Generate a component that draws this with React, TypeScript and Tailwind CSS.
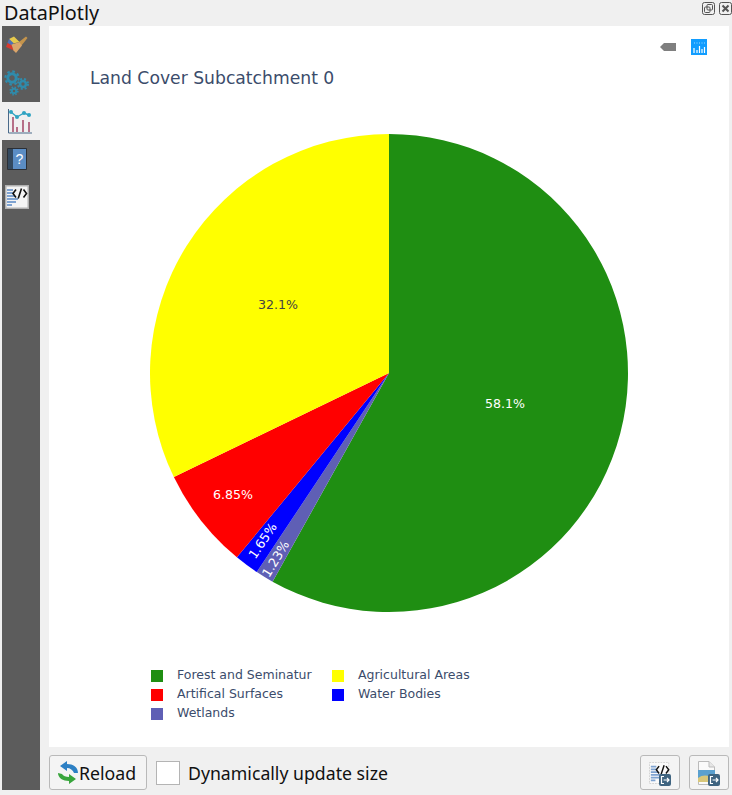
const CX = 240;
const CY = 240;
const R = 239;

const slices = [
  { label: "Forest and Seminatur", pct: 58.1, color: "#1f8e12" },
  { label: "Wetlands", pct: 1.23, color: "#5f5fb5" },
  { label: "Water Bodies", pct: 1.65, color: "#0000ff" },
  { label: "Artifical Surfaces", pct: 6.85, color: "#ff0000" },
  { label: "Agricultural Areas", pct: 32.17, color: "#ffff00" },
];

function point(deg: number) {
  const a = (deg * Math.PI) / 180;
  return `${CX + R * Math.sin(a)} ${CY - R * Math.cos(a)}`;
}

function Pie() {
  let start = 0;
  return (
    <svg width="480" height="480" viewBox="0 0 480 480" className="block">
      {slices.map((s) => {
        const end = start + (s.pct / 100) * 360;
        const large = end - start > 180 ? 1 : 0;
        const d = `M${CX} ${CY} L${point(start)} A${R} ${R} 0 ${large} 1 ${point(end)} Z`;
        start = end;
        return <path key={s.label} d={d} fill={s.color} />;
      })}
      <g fontFamily="'DejaVu Sans', sans-serif" fontSize="12.6" textAnchor="middle">
        <text x="356" y="275" fill="#fff">58.1%</text>
        <text x="129" y="176" fill="#444">32.1%</text>
        <text x="84" y="366" fill="#fff">6.85%</text>
        <text transform="translate(114 408) rotate(-56)" fill="#fff" dy="4">1.65%</text>
        <text transform="translate(127 426) rotate(-58.6)" fill="#fff" dy="4">1.23%</text>
      </g>
    </svg>
  );
}

function Swatch({ color }: { color: string }) {
  return <span className="h-3 w-3 shrink-0" style={{ background: color }} />;
}

function LegendItem({ label, color }: { label: string; color: string }) {
  return (
    <div className="flex h-[19px] items-center gap-[14px]">
      <Swatch color={color} />
      <span className="whitespace-nowrap">{label}</span>
    </div>
  );
}

function Broom() {
  return (
    <svg width="22" height="18" viewBox="0 0 22 18">
      <path d="M13 6 L20 0.5 L21.5 2 L15.5 9.5 Z" fill="#c4944c" />
      <path d="M3 3 L8 0.5 L13.5 6 L7 7.5 Z" fill="#e6c94c" />
      <path d="M1.5 7 L3 3 L7.5 7 L5.5 10 Z" fill="#4f72b8" />
      <path d="M0 11 L1.5 7 L5.5 9 L8 14.5 Z" fill="#d8392f" />
      <path d="M5.5 8.5 L13.5 6 L16 9.5 L10 17 L7.5 14.5 Z" fill="#dba56a" />
    </svg>
  );
}

function Gears() {
  return (
    <svg width="26" height="26" viewBox="0 0 26 26" fill="none" stroke="#2f8bab">
      <circle cx="8" cy="8" r="4.2" strokeWidth="3" />
      <circle cx="8" cy="8" r="6.6" strokeWidth="2.2" strokeDasharray="2.6 2.6" />
      <circle cx="19" cy="14" r="3" strokeWidth="2.6" />
      <circle cx="19" cy="14" r="5" strokeWidth="2" strokeDasharray="2 2" />
      <circle cx="10" cy="21" r="2.2" strokeWidth="2" />
      <circle cx="10" cy="21" r="3.8" strokeWidth="1.6" strokeDasharray="1.5 1.5" />
    </svg>
  );
}

function ChartIcon() {
  return (
    <svg width="26" height="26" viewBox="0 0 26 26" fill="none">
      <path d="M1.5 1 V25 H25" stroke="#4a6a8a" strokeWidth="1" />
      <path d="M6 9 V24 M10 19 V24 M16 12 V24 M22 14 V24" stroke="#a8506e" strokeWidth="1.6" />
      <path d="M4 4 L10 9 L17 5 L22 7" stroke="#2fa3c2" strokeWidth="1.4" />
      <circle cx="4" cy="4" r="2" fill="#2fa3c2" />
      <circle cx="10" cy="9" r="2" fill="#2fa3c2" />
      <circle cx="17" cy="5" r="2" fill="#2fa3c2" />
      <circle cx="22" cy="7" r="2" fill="#2fa3c2" />
    </svg>
  );
}

function HelpBook() {
  return (
    <svg width="20" height="22" viewBox="0 0 20 22">
      <rect width="20" height="22" rx="1" fill="#2b2f36" />
      <rect x="1" y="1" width="5" height="20" fill="#33495f" />
      <rect x="6" y="1" width="13" height="20" fill="#5b8dc4" />
      <text x="12.5" y="16" fontSize="14" textAnchor="middle" fill="#fff" fontFamily="'Liberation Sans', sans-serif">?</text>
    </svg>
  );
}

function CodeDoc({ framed = true, size = 24 }: { framed?: boolean; size?: number }) {
  return (
    <svg width={size} height={size} viewBox="0 0 24 24">
      {framed ? (
        <rect x="0.75" y="0.75" width="22.5" height="22.5" fill="#f4f4f4" stroke="#b0b0b0" strokeWidth="1.5" />
      ) : (
        <rect x="0.5" y="0.5" width="21" height="23" fill="#fafafa" stroke="#d0d0d0" strokeDasharray="2 1" />
      )}
      <path d="M2 5 H8 M2 8 H8 M2 11 H10 M2 14 H13 M2 17 H11 M2 20 H7" stroke="#7fa3d1" strokeWidth="1.8" />
      <path d="M11 4.5 L8 8.5 L11 12.5 M18.5 4.5 L21.5 8.5 L18.5 12.5 M16.5 3.5 L13.2 13.5" fill="none" stroke="#111" strokeWidth="1.6" />
    </svg>
  );
}

function ReloadIcon() {
  return (
    <svg width="20" height="24" viewBox="0 0 20 24" className="shrink-0">
      <path d="M2 5 L9 0 V3 C15 3 20 6 20 12 L16 12 C15 9 12 7 9 7 V10 Z" fill="#2d80c4" />
      <path d="M18 18 L11 13 V16 C8 16 5 15 4 13 L0 12 C0 17 5 20 11 20 V23 Z" fill="#38a53c" />
    </svg>
  );
}

function ExportBadge() {
  return (
    <span className="absolute bottom-[3px] right-[8px] flex h-[12px] w-[12px] items-center justify-center rounded-[2px] bg-[#3f6480]">
      <svg width="10" height="10" viewBox="0 0 10 10" fill="none" stroke="#fff" strokeWidth="1.2">
        <path d="M4 1.5 H1.5 V8.5 H4 M3.5 5 H9 M7 3 L9 5 L7 7" />
      </svg>
    </span>
  );
}

function ImageDoc() {
  return (
    <svg width="20" height="24" viewBox="0 0 20 24">
      <path d="M1.5 0.5 H12 L17.5 6 V23.5 H1.5 Z" fill="#fafafa" stroke="#bbb" />
      <path d="M12 0.5 V6 H17.5" fill="#e6e6e6" stroke="#bbb" />
      <rect x="1" y="9" width="17" height="12" fill="#5aa0cf" />
      <path d="M1 21 V17 C6 13 12 14 18 18 V21 Z" fill="#d8c77a" />
    </svg>
  );
}

export default function App() {
  return (
    <div className="flex h-[795px] w-[732px] flex-col overflow-hidden bg-[#f0f0f0] font-['Noto_Sans',sans-serif]">
      {/* Dock title */}
      <div className="flex h-[26px] shrink-0 items-center justify-between">
        <span className="pl-[4px] text-[19.8px] leading-[26px] text-[#111]">DataPlotly</span>
        <div className="mb-[10px] flex gap-[4px]">
          <svg width="13" height="13" viewBox="0 0 13 13" fill="none" stroke="#555" strokeWidth="1">
            <rect x="0.5" y="0.5" width="12" height="12" rx="2" />
            <rect x="5" y="2.5" width="5.5" height="5.5" rx="1" />
            <rect x="2.5" y="5" width="5.5" height="5.5" rx="1" />
          </svg>
          <svg width="13" height="13" viewBox="0 0 13 13" fill="none" stroke="#555">
            <rect x="0.5" y="0.5" width="12" height="12" rx="2" strokeWidth="1" />
            <path d="M3.5 3.5 L9.5 9.5 M9.5 3.5 L3.5 9.5" strokeWidth="2" />
          </svg>
        </div>
      </div>

      <div className="flex min-h-0 flex-1">
        {/* Side menu */}
        <div className="ml-[2px] flex h-[764px] w-[38px] shrink-0 flex-col">
          <div className="flex h-[76px] flex-col bg-[#5c5c5c]">
            <div className="flex h-[38px] items-center pl-[4px]"><Broom /></div>
            <div className="flex h-[38px] items-center pl-[2px]"><Gears /></div>
          </div>
          <div className="flex h-[38px] items-center pl-[5px]"><ChartIcon /></div>
          <div className="flex flex-1 flex-col bg-[#5c5c5c]">
            <div className="flex h-[38px] items-center pl-[5px]"><HelpBook /></div>
            <div className="flex h-[38px] items-center pl-[3px]"><CodeDoc /></div>
          </div>
        </div>

        <div className="ml-[9px] flex min-w-0 flex-1 flex-col">
          {/* Plot view */}
          <div className="relative mr-[3px] h-[721px] bg-white pt-[42px] font-['DejaVu_Sans',sans-serif]">
            <div className="absolute right-[22px] top-[13px] flex items-center gap-[15px]">
              <svg width="16" height="8" viewBox="0 0 16 8"><path d="M0 4 L4 0 H16 V8 H4 Z" fill="#7f7f7f" /></svg>
              <svg width="16" height="16" viewBox="0 0 16 16">
                <rect width="16" height="16" fill="#119dff" />
                <path d="M3 9 V14 M6 11 V14 M8.5 7 V14 M11 10 V14 M13.5 8 V14" stroke="#fff" strokeWidth="1.2" />
                <path d="M3 4 H14" stroke="#9fdcff" strokeWidth="1.2" strokeDasharray="1 1.5" />
              </svg>
            </div>
            <h1 className="pl-[41px] text-[17.2px] font-normal leading-[20px] text-[#3b4c6b]">Land Cover Subcatchment 0</h1>
            <div className="ml-[100px] mt-[45px]"><Pie /></div>
            <div className="ml-[102px] mt-[53px] grid w-fit grid-cols-[181px_auto] text-[12.5px] text-[#3b4c6b]">
              <LegendItem label={slices[0].label} color={slices[0].color} />
              <LegendItem label={slices[4].label} color={slices[4].color} />
              <LegendItem label={slices[3].label} color={slices[3].color} />
              <LegendItem label={slices[2].label} color={slices[2].color} />
              <LegendItem label={slices[1].label} color={slices[1].color} />
            </div>
          </div>

          {/* Bottom bar */}
          <div className="mt-[8px] flex items-center pr-[3px]">
            <button className="flex h-[35px] w-[98px] items-center rounded-[3px] border border-[#b9b9b9] bg-[#f4f4f4] pl-[8px] text-[17.7px] text-[#111]">
              <ReloadIcon />
              <span className="pl-[1px] pt-[2px]">Reload</span>
            </button>
            <span className="ml-[9px] h-[24px] w-[24px] border border-[#b4b4b4] bg-white" />
            <span className="ml-[8px] pt-[1px] text-[17.7px] text-[#111]">Dynamically update size</span>
            <button className="relative ml-auto flex h-[35px] w-[40px] items-center justify-center rounded-[3px] border border-[#b9b9b9] bg-[#f4f4f4]">
              <CodeDoc framed={false} size={22} />
              <ExportBadge />
            </button>
            <button className="relative ml-[9px] flex h-[35px] w-[40px] items-center justify-center rounded-[3px] border border-[#b9b9b9] bg-[#f4f4f4] pr-[4px]">
              <ImageDoc />
              <ExportBadge />
            </button>
          </div>
        </div>
      </div>
    </div>
  );
}
